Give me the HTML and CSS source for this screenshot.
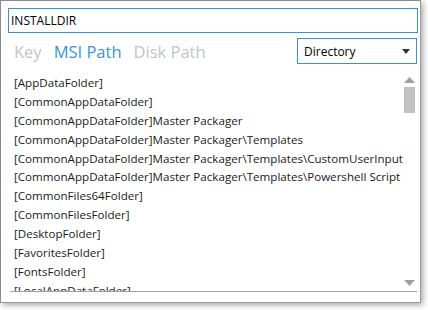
FILE: index.html
```html
<!DOCTYPE html>
<html lang="en">
<head>
    <meta charset="UTF-8">
    <title>Path Picker</title>
    <link rel="stylesheet" href="styles.css">
</head>
<body>
    <div class="window">
        <input type="text" class="search" value="INSTALLDIR">

        <div class="toolbar">
            <div class="tabs">
                <span class="tab">Key</span>
                <span class="tab active">MSI Path</span>
                <span class="tab">Disk Path</span>
            </div>
            <div class="combo">
                <span>Directory</span>
                <svg width="8" height="5" viewBox="0 0 8 5"><path d="M0 0h8L4 5z" fill="#333"/></svg>
            </div>
        </div>

        <div class="list-wrap">
            <ul class="list">
                <li>[AppDataFolder]</li>
                <li>[CommonAppDataFolder]</li>
                <li>[CommonAppDataFolder]Master Packager</li>
                <li>[CommonAppDataFolder]Master Packager\Templates</li>
                <li>[CommonAppDataFolder]Master Packager\Templates\CustomUserInput</li>
                <li>[CommonAppDataFolder]Master Packager\Templates\Powershell Script</li>
                <li>[CommonFiles64Folder]</li>
                <li>[CommonFilesFolder]</li>
                <li>[DesktopFolder]</li>
                <li>[FavoritesFolder]</li>
                <li>[FontsFolder]</li>
                <li>[LocalAppDataFolder]</li>
            </ul>
            <div class="scrollbar">
                <svg width="11" height="6" viewBox="0 0 11 6"><path d="M0 6h11L5.5 0z" fill="#a0a0a0"/></svg>
                <div class="thumb"></div>
                <div class="track"></div>
                <svg width="11" height="6" viewBox="0 0 11 6"><path d="M0 0h11L5.5 6z" fill="#a0a0a0"/></svg>
            </div>
        </div>
    </div>
</body>
</html>
```

FILE: styles.css
```css
body {
  margin: 0;
  padding: 0;
  background-color: #fff;
  font-family: "Open Sans", "Noto Sans", sans-serif;
  width: 428px;
  height: 310px;
  overflow: hidden;
}
.window {
  width: 421px;
  height: 303px;
  box-sizing: border-box;
  border-left: 1px solid #8a8a8a;
  border-top: 1px solid #8a8a8a;
  border-right: 1px solid #9a9a9a;
  border-bottom: 1px solid #9a9a9a;
  box-shadow: 2px 2px 6px rgba(0, 0, 0, 0.35);
  background-color: #fff;
  padding: 7px 2px 0 7px;
}
.search {
  display: block;
  width: 410px;
  height: 25px;
  box-sizing: border-box;
  border: 1px solid #3c8fd6;
  padding: 0 2px;
  font-family: inherit;
  font-size: 12px;
  color: #000;
  outline: none;
}
.toolbar {
  display: flex;
  justify-content: space-between;
  align-items: center;
  margin-top: 5px;
  height: 26px;
}
.tabs {
  display: flex;
  gap: 12px;
  padding-left: 6px;
  font-size: 16.5px;
  color: #c4c4c4;
}
.tab.active {
  color: #3a95dc;
}
.combo {
  width: 120px;
  height: 26px;
  box-sizing: border-box;
  border: 1px solid #3c8fd6;
  display: flex;
  align-items: center;
  justify-content: space-between;
  padding: 0 6px 0 6px;
  font-size: 12px;
  color: #000;
  margin-right: 1px;
}
.list-wrap {
  display: flex;
  margin-top: 10px;
  height: 217px;
  border-bottom: 1px solid #a0a0a0;
  margin-left: 2px;
  margin-right: 1px;
}
.list {
  flex: 1;
  list-style: none;
  margin: 0;
  padding: 0 0 0 4px;
  overflow: hidden;
  font-size: 11.6px;
  color: #1a1a1a;
}
.list li {
  height: 18.9px;
  line-height: 18.9px;
  white-space: nowrap;
}
.scrollbar {
  width: 12px;
  display: flex;
  flex-direction: column;
  align-items: center;
  padding: 3px 0 5px;
  margin-right: 2px;
}
.thumb {
  width: 11px;
  height: 26px;
  background-color: #c2c2c2;
  margin-top: 4px;
}
.track {
  flex: 1;
}
```
